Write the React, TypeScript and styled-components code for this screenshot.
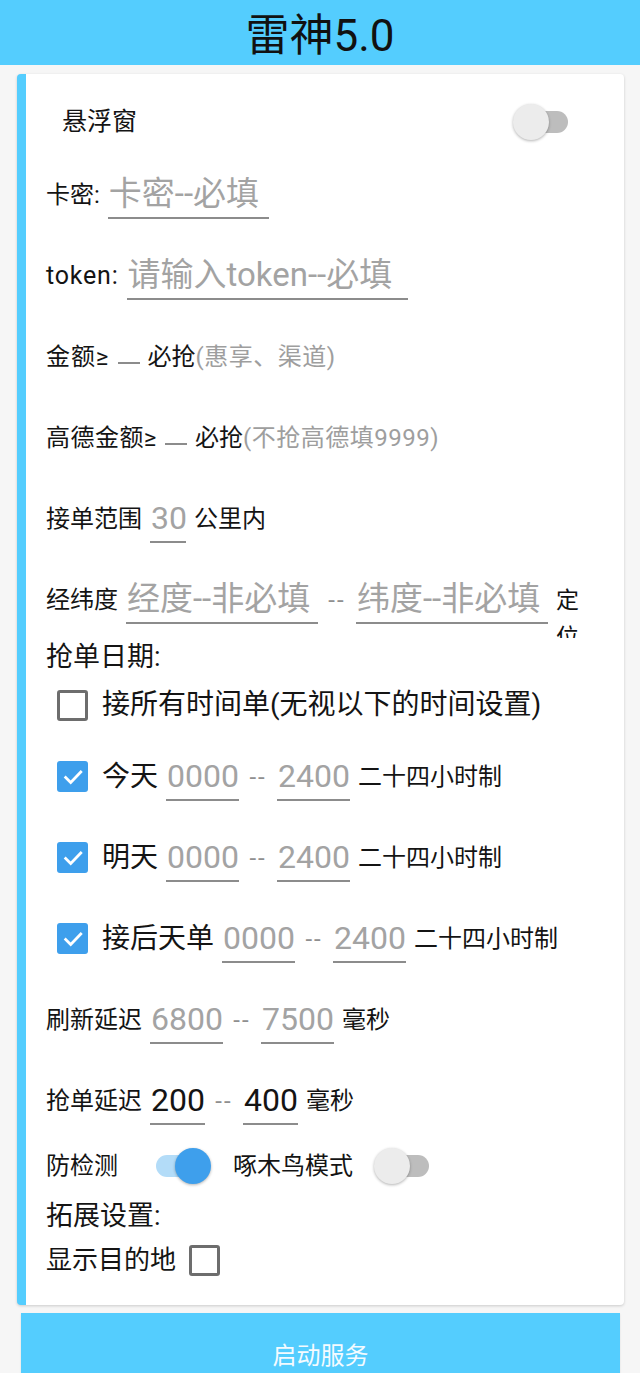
import React from "react";
import styled, { createGlobalStyle } from "styled-components";

const Global = createGlobalStyle`
  html, body { margin: 0; padding: 0; overflow: hidden; background: #f6f6f6; }
  body { font-family: Roboto, "Noto Sans CJK SC", sans-serif; color: #141414; }
  * { box-sizing: border-box; }
`;

const BLUE = "#54cdfe";
const CHECK_BLUE = "#3e9fec";

const Page = styled.div`
  width: 640px;
  display: flex;
  flex-direction: column;
`;

const Header = styled.header`
  height: 65px;
  background: ${BLUE};
  display: flex;
  align-items: center;
  justify-content: center;
  padding-top: 6px;
`;

const Title = styled.h1`
  margin: 0;
  font-size: 44px;
  line-height: 1;
  font-weight: 400;
  color: #111;
`;

const Card = styled.section`
  margin: 9px 16px 0 17px;
  background: #fff;
  border-left: 9px solid ${BLUE};
  border-radius: 4px;
  box-shadow: 0 1px 3px rgba(0, 0, 0, 0.18);
  padding: 16px 0 26px 20px;
  display: flex;
  flex-direction: column;
`;

const Row = styled.div<{ $h: number }>`
  height: ${(p) => p.$h}px;
  display: flex;
  align-items: center;
  gap: 8px;
`;

const SwitchRow = styled.div`
  height: 64px;
  display: flex;
  align-items: center;
  justify-content: space-between;
  padding: 0 53px 0 16px;
`;

const Label = styled.span<{ $size?: number; $ml?: number; $ls?: number }>`
  font-size: ${(p) => p.$size ?? 24}px;
  line-height: 32px;
  white-space: nowrap;
  color: #141414;
  margin-left: ${(p) => p.$ml ?? 0}px;
  letter-spacing: ${(p) => p.$ls ?? 0}px;
`;

const Hint = styled.span`
  font-size: 24px;
  line-height: 32px;
  white-space: nowrap;
  color: #9e9e9e;
  letter-spacing: 0.5px;
`;

const Field = styled.span<{ $w: number; $dark?: boolean; $size?: number }>`
  display: inline-block;
  width: ${(p) => p.$w}px;
  flex: none;
  font-size: ${(p) => p.$size ?? 32}px;
  line-height: 34px;
  padding: 6px 0 6px 1px;
  border-bottom: 2px solid #8c8c8c;
  color: ${(p) => (p.$dark ? "#141414" : "#a3a3a3")};
  white-space: nowrap;
  overflow: hidden;
`;

const Sep = styled.span`
  width: 22px;
  flex: none;
  text-align: center;
  font-size: 24px;
  line-height: 32px;
  letter-spacing: 2px;
  color: #8f8f8f;
`;

const Locate = styled.span`
  align-self: flex-start;
  margin-top: 23px;
  width: 24px;
  height: 56px;
  overflow: hidden;
  font-size: 23px;
  line-height: 37px;
  color: #111;
  word-break: break-all;
`;

const SwitchBox = styled.span<{ $ml?: number }>`
  position: relative;
  width: 58px;
  height: 38px;
  flex: none;
  margin-left: ${(p) => p.$ml ?? 0}px;
`;

const Track = styled.span<{ $on: boolean }>`
  position: absolute;
  left: 3px;
  right: 3px;
  top: 8px;
  height: 22px;
  border-radius: 11px;
  background: ${(p) => (p.$on ? "#b3dcf8" : "#bdbdbd")};
`;

const Thumb = styled.span<{ $on: boolean }>`
  position: absolute;
  top: 1px;
  width: 36px;
  height: 36px;
  border-radius: 50%;
  ${(p) => (p.$on ? "right: 0;" : "left: 0;")}
  background: ${(p) => (p.$on ? CHECK_BLUE : "#ececec")};
  box-shadow: 0 1px 3px rgba(0, 0, 0, 0.3);
`;

const Switch = ({ on, ml }: { on: boolean; ml?: number }) => (
  <SwitchBox $ml={ml}>
    <Track $on={on} />
    <Thumb $on={on} />
  </SwitchBox>
);

const Box = styled.span<{ $checked: boolean; $ml?: number; $mr?: number }>`
  width: 31px;
  height: 31px;
  flex: none;
  border-radius: 3px;
  margin-left: ${(p) => p.$ml ?? 0}px;
  margin-right: ${(p) => p.$mr ?? 0}px;
  display: flex;
  align-items: center;
  justify-content: center;
  background: ${(p) => (p.$checked ? CHECK_BLUE : "transparent")};
  border: ${(p) => (p.$checked ? "none" : "3px solid #6d6d6d")};
`;

const Check = ({ checked, ml, mr }: { checked: boolean; ml?: number; mr?: number }) => (
  <Box $checked={checked} $ml={ml} $mr={mr}>
    {checked && (
      <svg width="22" height="22" viewBox="0 0 24 24" fill="none">
        <path d="M4 12.5 L9.5 18 L20.5 6.5" stroke="#fff" strokeWidth="3" strokeLinecap="square" />
      </svg>
    )}
  </Box>
);

const Button = styled.button`
  margin: 8px 20px 0 21px;
  height: 86px;
  border: none;
  padding: 0;
  background: ${BLUE};
  color: #f4fbff;
  font-family: Roboto, "Noto Sans CJK SC", sans-serif;
  font-size: 24px;
  line-height: 32px;
  box-shadow: 0 1px 2px rgba(0, 0, 0, 0.1);
`;

const DayRow = ({ label }: { label: string }) => (
  <Row $h={81}>
    <Check checked ml={11} mr={6} />
    <Label $size={28}>{label}</Label>
    <Field $w={73}>0000</Field>
    <Sep>--</Sep>
    <Field $w={73}>2400</Field>
    <Label>二十四小时制</Label>
  </Row>
);

export default function App() {
  return (
    <Page>
      <Global />
      <Header>
        <Title>雷神5.0</Title>
      </Header>
      <Card>
        <SwitchRow>
          <Label $size={25}>悬浮窗</Label>
          <Switch on={false} />
        </SwitchRow>
        <Row $h={81}>
          <Label>卡密:</Label>
          <Field $w={161} $size={33}>卡密--必填</Field>
        </Row>
        <Row $h={81}>
          <Label $size={25} $ls={0.8}>token:</Label>
          <Field $w={281} $size={33}>请输入token--必填</Field>
        </Row>
        <Row $h={81}>
          <Label $ls={1}>金额≥</Label>
          <Field $w={22} />
          <Label>
            必抢<Hint>(惠享、渠道)</Hint>
          </Label>
        </Row>
        <Row $h={81}>
          <Label $ls={0.5}>高德金额≥</Label>
          <Field $w={22} />
          <Label>
            必抢<Hint>(不抢高德填9999)</Hint>
          </Label>
        </Row>
        <Row $h={81}>
          <Label>接单范围</Label>
          <Field $w={36}>30</Field>
          <Label>公里内</Label>
        </Row>
        <Row $h={81}>
          <Label>经纬度</Label>
          <Field $w={192} $size={33}>经度--非必填</Field>
          <Sep>--</Sep>
          <Field $w={192} $size={33}>纬度--非必填</Field>
          <Locate>定位</Locate>
        </Row>
        <Row $h={34}>
          <Label $size={27}>抢单日期:</Label>
        </Row>
        <Row $h={62}>
          <Check checked={false} ml={11} mr={6} />
          <Label $size={28}>接所有时间单(无视以下的时间设置)</Label>
        </Row>
        <DayRow label="今天" />
        <DayRow label="明天" />
        <DayRow label="接后天单" />
        <Row $h={81}>
          <Label>刷新延迟</Label>
          <Field $w={73}>6800</Field>
          <Sep>--</Sep>
          <Field $w={73}>7500</Field>
          <Label>毫秒</Label>
        </Row>
        <Row $h={81}>
          <Label>抢单延迟</Label>
          <Field $w={55} $dark>200</Field>
          <Sep>--</Sep>
          <Field $w={55} $dark>400</Field>
          <Label>毫秒</Label>
        </Row>
        <Row $h={50}>
          <Label>防检测</Label>
          <Switch on ml={27} />
          <Label $ml={14}>啄木鸟模式</Label>
          <Switch on={false} ml={13} />
        </Row>
        <Row $h={50}>
          <Label $size={27}>拓展设置:</Label>
        </Row>
        <Row $h={38}>
          <Label $size={26}>显示目的地</Label>
          <Check checked={false} ml={5} />
        </Row>
      </Card>
      <Button>启动服务</Button>
    </Page>
  );
}
